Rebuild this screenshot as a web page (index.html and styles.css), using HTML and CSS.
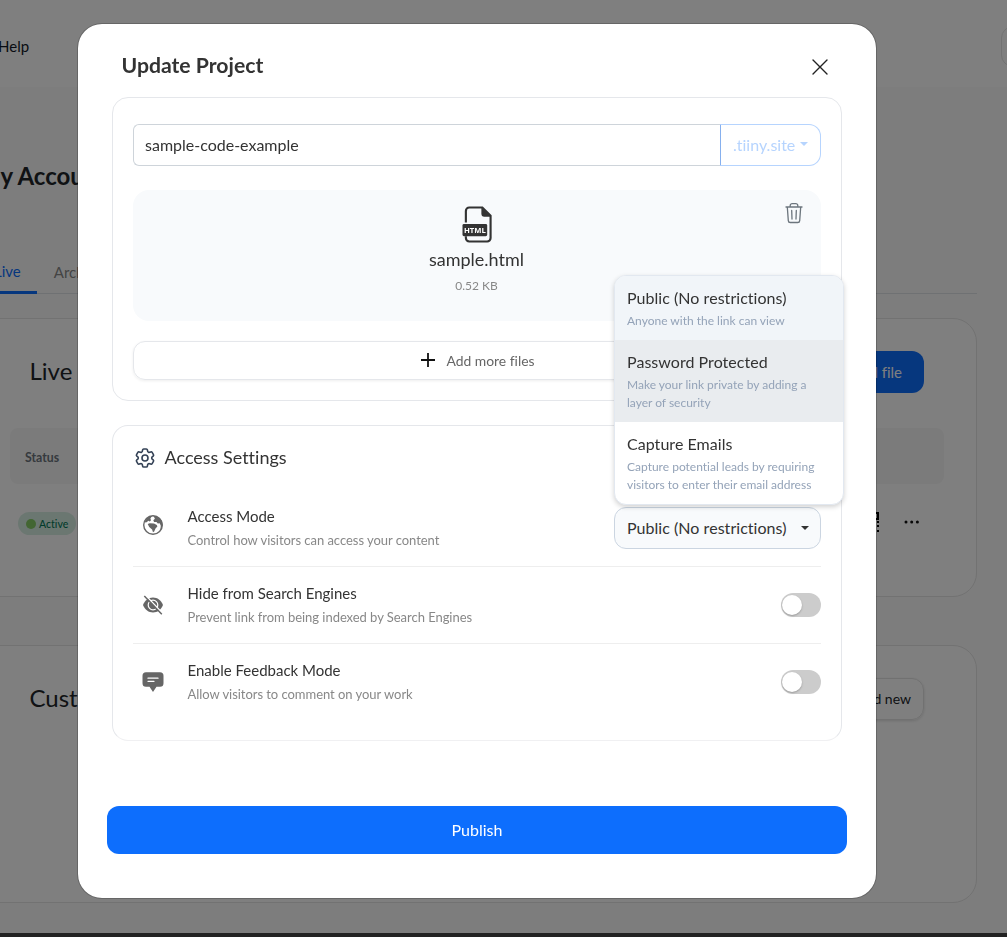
FILE: index.html
```html
<!DOCTYPE html>
<html lang="en">
<head>
<meta charset="utf-8">
<title>Update Project</title>
<link rel="stylesheet" href="styles.css">
</head>
<body>
<div class="page">
  <header class="nav"><span>Help</span><span class="nav-btn"></span></header>
  <main class="account">
    <h1 class="account-title">My Account</h1>
    <nav class="tabs"><span class="tab tab-on">Live</span><span class="tab">Archived</span></nav>
    <section class="panel panel-live">
      <div class="panel-head"><h2>Live</h2><span class="btn-upload">Upload file</span></div>
      <div class="table-head">Status</div>
      <div class="table-row">
        <span class="pill"><i class="dot"></i>Active</span>
        <span class="row-tools">
          <svg width="20" height="20" viewBox="0 0 20 20" fill="none" stroke="#000" stroke-width="2"><path d="M1 1h6v6H1zM13 1h6v6h-6zM1 13h6v6H1z"/><path d="M11 10h2m1 0h2m2 0h2M11 14h3m1 0h2m1 0h2M11 19h2m1 0h2m2 0h2"/></svg>
          <svg width="16" height="4" viewBox="0 0 16 4" fill="#111"><circle cx="2" cy="2" r="1.5"/><circle cx="7.7" cy="2" r="1.5"/><circle cx="13.4" cy="2" r="1.5"/></svg>
        </span>
      </div>
    </section>
    <section class="panel panel-domains">
      <div class="panel-head"><h2>Custom domains</h2><span class="btn-add">Add new</span></div>
    </section>
  </main>
  <footer class="foot"></footer>
</div>

<div class="backdrop">
  <div class="modal">
    <div class="modal-head">
      <h3>Update Project</h3>
      <svg class="close" width="16" height="16" viewBox="0 0 16 16" stroke="#222" stroke-width="1.4" stroke-linecap="round"><path d="M1 1l14 14M15 1L1 15"/></svg>
    </div>

    <section class="card card-files">
      <div class="link-row">
        <div class="link-input">sample-code-example</div>
        <div class="link-domain">.tiiny.site<i class="caret"></i></div>
      </div>
      <div class="file">
        <svg width="31" height="37" viewBox="0 0 32 38">
          <path d="M4 17V5a3.5 3.5 0 0 1 3.5-3.5H21L29.500 10v23a3.500 3.500 0 0 1-3.500 3.500H7.500A3.500 3.500 0 0 1 4 33v-2" fill="none" stroke="#333" stroke-width="2.200"/>
          <path d="M20 1.500L30 11h-7a3 3 0 0 1-3-3z" fill="#333"/>
          <rect x="0.500" y="18.500" width="25.500" height="12.500" rx="1.500" fill="#333"/>
          <text class="file-tag" x="13.300" y="27.700" text-anchor="middle" textLength="22.500" lengthAdjust="spacingAndGlyphs">HTML</text>
        </svg>
        <div class="file-name">sample.html</div>
        <div class="file-size">0.52 KB</div>
        <svg class="trash" width="18" height="22" viewBox="0 0 18 22" fill="none" stroke="#6c757d" stroke-width="1.300" stroke-linecap="round" stroke-linejoin="round"><path d="M1 5h16M2.300 5l1 13.600A2 2 0 0 0 5.300 20.500h7.400a2 2 0 0 0 2-1.900l1-13.600M5.200 5V3.600A2 2 0 0 1 7.200 1.600h3.600a2 2 0 0 1 2 2V5M6.700 8.500l.3 8.500M11.300 8.500L11 17"/></svg>
      </div>
      <div class="add-files">
        <svg width="14" height="14" viewBox="0 0 14 14" stroke="#111" stroke-width="1.800"><path d="M7 0v14M0 7h14"/></svg>
        <span>Add more files</span>
      </div>
    </section>

    <section class="card card-access">
      <div class="access-head">
        <svg width="24" height="24" viewBox="0 0 24 24" fill="none" stroke="#334155" stroke-width="1.600" stroke-linejoin="round"><path d="M9.594 3.940c.09-.542.56-.94 1.110-.94h2.593c.55 0 1.020.398 1.110.94l.213 1.281c.063.374.313.686.645.87.074.04.147.083.22.127.324.196.72.257 1.075.124l1.217-.456a1.125 1.125 0 0 1 1.370.49l1.296 2.247a1.125 1.125 0 0 1-.26 1.431l-1.003.827c-.293.24-.438.613-.431.992a6.759 6.759 0 0 1 0 .255c-.007.378.138.75.43.99l1.005.828c.424.35.534.954.26 1.430l-1.298 2.247a1.125 1.125 0 0 1-1.369.491l-1.217-.456c-.355-.133-.75-.072-1.076.124a6.570 6.570 0 0 1-.22.128c-.331.183-.581.495-.644.869l-.213 1.280c-.09.543-.56.941-1.110.941h-2.594c-.55 0-1.020-.398-1.110-.94l-.213-1.281c-.062-.374-.312-.686-.644-.87a6.520 6.520 0 0 1-.22-.127c-.325-.196-.72-.257-1.076-.124l-1.217.456a1.125 1.125 0 0 1-1.369-.49l-1.297-2.247a1.125 1.125 0 0 1 .26-1.431l1.004-.827c.292-.24.437-.613.43-.992a6.932 6.932 0 0 1 0-.255c.007-.378-.138-.75-.43-.99l-1.004-.828a1.125 1.125 0 0 1-.26-1.430l1.297-2.247a1.125 1.125 0 0 1 1.370-.491l1.216.456c.356.133.751.072 1.076-.124.072-.044.146-.087.22-.128.332-.183.582-.495.644-.869l.214-1.281z"/><circle cx="12" cy="12" r="3"/></svg>
        <span>Access Settings</span>
      </div>

      <div class="setting">
        <svg class="setting-icon icon-globe" width="24" height="24" viewBox="0 0 24 24"><circle cx="12" cy="12" r="9.300" fill="#fff" stroke="#666" stroke-width="1.400"/><path d="M11 3c-2 .2-4.500 1.300-6 3.400L3.400 9.500l2.300-.3 1.600-1.500 1.500.8 1.200-1.300-.6-1.700zM6.700 11l2-.8 4.300.4 2.800 1.300.6 1.700-1.900 2-1.300 2.800-1.200.9-.9-2.800-2.900-2.400zM12.500 3l1.400 2.700-1.600 1.600.8 1.600 2.400.1 1.300 1.500 1.900-.2 1.100 2.400-.4 4c2.800-3.300 2.600-7.500.5-10.200C18.300 4.500 15.500 3 12.500 3z" fill="#666"/></svg>
        <div class="setting-text"><div class="setting-title">Access Mode</div><div class="setting-sub">Control how visitors can access your content</div></div>
        <div class="select">
          <span>Public (No restrictions)</span><i class="caret"></i>
          <div class="menu">
            <div class="option option-current"><div class="option-title">Public (No restrictions)</div><div class="option-sub">Anyone with the link can view</div></div>
            <div class="option option-hover"><div class="option-title">Password Protected</div><div class="option-sub">Make your link private by adding a<br>layer of security</div></div>
            <div class="option"><div class="option-title">Capture Emails</div><div class="option-sub">Capture potential leads by requiring<br>visitors to enter their email address</div></div>
          </div>
        </div>
      </div>

      <div class="setting">
        <svg class="setting-icon" width="24" height="24" viewBox="0 0 24 24"><path d="M2 12c2-4.800 5.600-7.500 10-7.500s8 2.700 10 7.500c-2 4.800-5.600 7.500-10 7.500S4 16.800 2 12z" fill="#666"/><circle cx="12" cy="12" r="4.800" fill="none" stroke="#fff" stroke-width="1.200"/><path d="M4.500 2.300l17 18" stroke="#fff" stroke-width="1.500"/><path d="M3.300 3l17.500 18.300" stroke="#666" stroke-width="1.500"/></svg>
        <div class="setting-text"><div class="setting-title">Hide from Search Engines</div><div class="setting-sub">Prevent link from being indexed by Search Engines</div></div>
        <span class="toggle"><i></i></span>
      </div>

      <div class="setting setting-last">
        <svg class="setting-icon" width="24" height="24" viewBox="0 0 24 24"><path d="M5 2.300h14a3.500 3.500 0 0 1 3.500 3.500v7.500a3.500 3.500 0 0 1-3.500 3.500h-3.500L12 22l-3.500-5.200H5a3.500 3.500 0 0 1-3.500-3.500V5.800A3.500 3.500 0 0 1 5 2.300z" fill="#666"/><path d="M7 8.200h10M7 11.300h6" stroke="#fff" stroke-width="1.300" stroke-linecap="round"/></svg>
        <div class="setting-text"><div class="setting-title">Enable Feedback Mode</div><div class="setting-sub">Allow visitors to comment on your work</div></div>
        <span class="toggle"><i></i></span>
      </div>
    </section>

    <div class="publish">Publish</div>
  </div>
</div>
</body>
</html>
```

FILE: styles.css
```css
* { box-sizing: border-box; }
html, body { margin: 0; height: 937px; overflow: hidden; }
body { font-family: Lato, sans-serif; font-size: 16px; line-height: 24px; color: #333; white-space: nowrap; font-variant-ligatures: none; }
h1, h2, h3 { margin: 0; }
svg { display: block; flex: none; }

/* Account page */
.page { height: 937px; background: #fbfbfb; color: #212529; overflow: hidden; display: flex; flex-direction: column; }
.nav { height: 87px; flex: none; background: #fff; display: flex; justify-content: space-between; padding: 26px 0 0; font-size: 15px; line-height: 41px; color: #111827; }
.nav > span:first-child { margin-left: -2px; }
.nav-btn { width: 30px; height: 41px; margin-right: -24px; border: 1px solid #e4e4e4; border-radius: 12px; }
.account { flex: none; width: 1007px; height: 846px; margin-left: -30px; }
.account-title { padding: 69px 0 0 8px; font-size: 24px; line-height: 40px; font-weight: 700; }
.tabs { display: flex; height: 42px; margin-top: 56px; padding-left: 11px; border-bottom: 1px solid #dee2e6; color: #888; }
.tab { line-height: 40px; padding: 0 16px 0 17px; font-size: 15px; }
.tab-on { height: 42px; line-height: 38px; padding: 0 16px 0 13px; border-bottom: 3px solid #0d6efd; color: #0d6efd; }
.panel { background: #fff; border: 1px solid #e4e4e4; border-radius: 24px; padding: 32px 52px 0 59px; }
.panel-live { height: 279px; margin-top: 24px; }
.panel-domains { height: 258px; margin-top: 48px; }
.panel-head { display: flex; justify-content: space-between; align-items: center; height: 42px; }
.panel-head h2 { font-size: 24px; font-weight: 400; margin: -2px 0 0 -0.5px; }
.btn-upload { background: #0d6efd; color: #fff; font-size: 15px; line-height: 42px; padding: 0 22px; border-radius: 12px; }
.btn-add { border: 1px solid #e2e2e2; font-size: 14px; line-height: 40px; padding: 0 12px; border-radius: 12px; box-shadow: 0 1px 3px #ddd; }
.table-head { height: 56px; margin: 35px -20px 0 -20px; padding-left: 15px; border-radius: 8px; background: #f7f7f7; color: #6c757d; font-size: 12.300px; font-weight: 700; line-height: 60px; }
.table-row { display: flex; justify-content: space-between; align-items: center; margin-top: 28px; margin-left: -12px; height: 23px; }
.pill { display: flex; align-items: center; gap: 3px; height: 23px; padding: 0 8px; border-radius: 12px; background: #d7eee3; color: #047857; font-size: 10.500px; font-weight: 500; }
.dot { width: 10px; height: 10px; border-radius: 5px; background: #84cc64; }
.row-tools { display: flex; align-items: center; gap: 25px; margin: -4px 4px 0 0; }
.foot { height: 4px; flex: none; background: #444; }

/* Modal */
.backdrop { position: fixed; inset: 0; background: rgba(0, 0, 0, .5); padding: 23px 0 0 77px; }
.modal { width: 800px; height: 876px; background: #fff; background-clip: padding-box; border: 1px solid rgba(0, 0, 0, .2); border-radius: 25px; padding: 0 29px; }
.modal-head { display: flex; justify-content: space-between; align-items: center; height: 73px; padding: 9px 19.500px 0 14.500px; }
.modal-head h3 { font-size: 21.200px; font-weight: 700; line-height: 30px; color: #333; }
.close { margin-top: 3px; }
.card { margin: 0 5px; border: 1px solid #e5e7eb; border-radius: 16px; padding: 0 20px; }
.card-files { height: 304px; padding-top: 26px; }
.link-row { display: flex; height: 42px; line-height: 40px; }
.link-input { flex: 1; border: 1px solid #ced4da; border-right: 0; border-radius: 6px 0 0 6px; padding-left: 11px; color: #333; }
.link-domain { width: 101px; border: 1px solid #b6d4fe; border-left-color: #86b0ee; border-radius: 0 12px 12px 0; color: #b6d4fe; display: flex; align-items: center; padding-left: 12px; }
.caret { border: 4px solid transparent; border-top-color: currentColor; border-bottom: 0; }
.link-domain .caret { margin: -3px 0 0 5px; }
.file { position: relative; height: 131px; margin-top: 24px; background: #f8fafc; border-radius: 16px; display: flex; flex-direction: column; align-items: center; padding-top: 15.500px; }
.file-tag { font: 700 8px "Open Sans", sans-serif; fill: #fff; }
.file-name { font-size: 18px; line-height: 24px; margin-top: 4.500px; padding-right: 1px; }
.file-size { font-size: 12px; line-height: 18px; margin-top: 6px; padding-right: 1px; color: #888; }
.trash { position: absolute; right: 18px; top: 12px; }
.add-files { height: 39px; margin-top: 20px; border: 1px solid #e5e7eb; border-radius: 12px; box-shadow: 0 1px 3px rgba(0, 0, 0, .07); display: flex; align-items: center; justify-content: center; gap: 11px; font-size: 13.900px; color: #666; padding: 1px 0 0 2px; }
.add-files svg { margin-top: -2px; }
.card-access { height: 316px; margin-top: 24px; border-bottom-color: #f0f0f2; }
.access-head { display: flex; align-items: center; gap: 7.500px; height: 64px; font-size: 18px; }
.access-head span { margin-top: -2px; }
.setting { display: flex; align-items: center; height: 77px; border-bottom: 1px solid #eee; padding-left: 8px; }
.setting-last { height: 76px; border-bottom: 0; }
.icon-globe { margin-top: -7px; }
.setting-text { flex: 1; margin: -2px 0 0 22.500px; }
.setting-title { font-size: 15px; line-height: 24px; }
.setting-sub { font-size: 13px; line-height: 23px; padding-top: 1px; margin-bottom: -1px; letter-spacing: -0.04px; color: #888; }
.toggle { width: 40px; height: 24px; border-radius: 12px; background: #ccc; padding: 2px 1px; }
.toggle i { display: block; width: 20px; height: 20px; border-radius: 10px; background: #fff; box-shadow: 0 1px 2px rgba(0, 0, 0, .25); }
.select { position: relative; width: 207px; height: 42px; border: 1px solid #cbd5e1; border-radius: 12px; background: #f8fafc; display: flex; align-items: center; justify-content: space-between; padding: 0 11px 0 12px; }
.menu { position: absolute; left: -1px; bottom: 43px; width: 230px; border: 1px solid #e2e8f0; border-radius: 12px; overflow: hidden; background: #fff; box-shadow: 0 2px 5px rgba(0, 0, 0, .18); }
.option { padding: 11px 12px 10px; }
.option-current { background: #f1f5f9; }
.option-hover { background: #e9ecef; }
.option-title { line-height: 22px; margin-bottom: 3px; }
.option-sub { font-size: 12px; line-height: 18px; color: #94a3b8; }
.select > span, .option-title { letter-spacing: 0.04px; }
.publish { height: 48px; margin-top: 65px; border-radius: 12px; background: #0d6efd; color: #fff; font-size: 16px; line-height: 48px; text-align: center; }
```
